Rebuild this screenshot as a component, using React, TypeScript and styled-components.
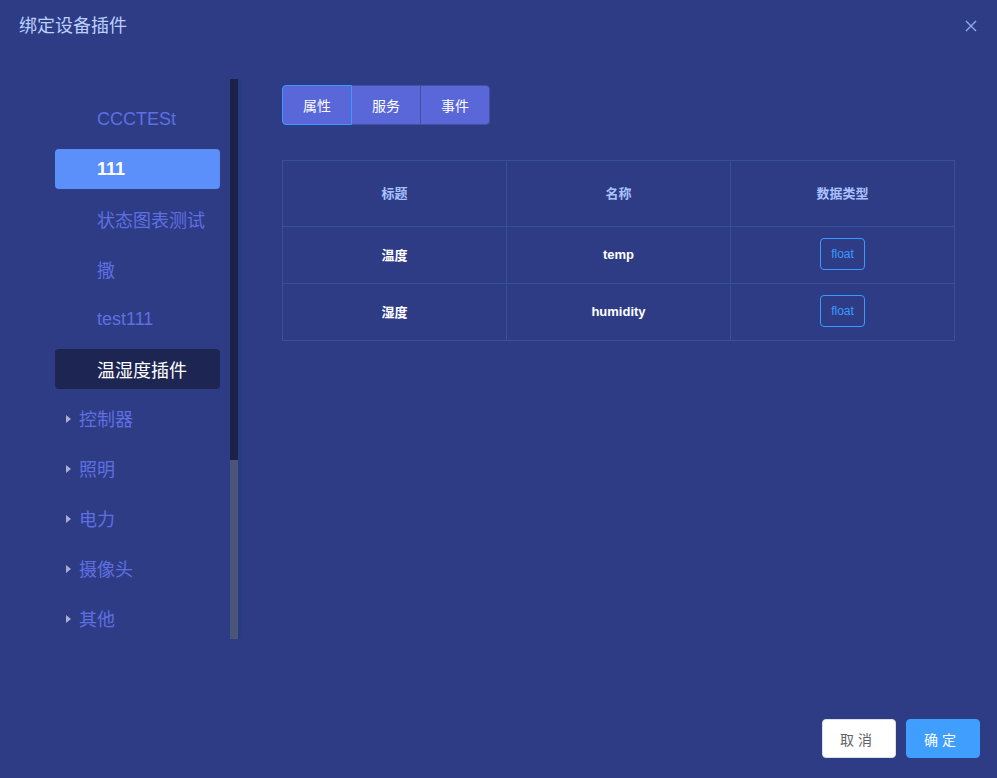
import React, { useState } from 'react';
import styled, { createGlobalStyle } from 'styled-components';

const GlobalStyle = createGlobalStyle`
  html, body {
    margin: 0;
    padding: 0;
    background: #2e3c86;
  }
  * { box-sizing: border-box; }
`;

const FONT = `"Liberation Sans", "Noto Sans CJK SC", sans-serif`;

/* ── layout ── */

const Dialog = styled.div`
  width: 997px;
  height: 778px;
  background: #2e3c86;
  font-family: ${FONT};
  display: flex;
  flex-direction: column;
`;

const Header = styled.div`
  height: 79px;
  padding: 14px 19px 0;
  display: flex;
  align-items: flex-start;
  justify-content: space-between;
`;

const Title = styled.div`
  font-size: 18px;
  line-height: 24px;
  color: #bcd0ff;
`;

const CloseBtn = styled.button`
  border: 0;
  background: none;
  padding: 0;
  margin: 6px 1px 0 0;
  cursor: pointer;
  display: flex;
  color: #8fa9f2;
`;

const Body = styled.div`
  flex: 1;
  display: flex;
  gap: 40px;
  padding: 0 42px 0 55px;
`;

const Sidebar = styled.div`
  width: 187px;
  height: 560px;
  display: flex;
  border-right: 4px solid #283a80;
`;

const List = styled.div`
  flex: 1;
  overflow: hidden;
  display: flex;
  flex-direction: column;
  gap: 10px;
  padding: 20px 10px 0 0;
`;

const ScrollTrack = styled.div`
  width: 8px;
  background: #4b5479;
  display: flex;
  flex-direction: column;
`;

const ScrollThumb = styled.div`
  background: #1b2149;
`;

const Item = styled.div<{ $variant?: 'selected' | 'dark' }>`
  flex: none;
  height: 40px;
  border-radius: 4px;
  display: flex;
  align-items: center;
  gap: 8px;
  padding-left: 42px;
  font-size: 18px;
  cursor: pointer;
  background: ${(p) =>
    p.$variant === 'selected' ? '#5b8ff9' : p.$variant === 'dark' ? '#1d2552' : 'transparent'};
  color: ${(p) => (p.$variant ? '#ffffff' : '#5e6fe0')};
  font-weight: ${(p) => (p.$variant === 'selected' ? 700 : 400)};
`;

const Group = styled(Item)`
  padding-left: 11px;
  padding-bottom: 2px;
`;

const Caret = styled.span`
  width: 0;
  height: 0;
  margin-top: 2px;
  border-top: 4px solid transparent;
  border-bottom: 4px solid transparent;
  border-left: 5px solid #a9b0cc;
`;

const Main = styled.div`
  flex: 1;
  padding-top: 6px;
  display: flex;
  flex-direction: column;
  gap: 35px;
`;

const Tabs = styled.div`
  display: flex;
`;

const Tab = styled.button<{ $active?: boolean; $first?: boolean; $last?: boolean }>`
  width: 70px;
  height: 40px;
  font-family: ${FONT};
  font-size: 14px;
  color: #ffffff;
  background: #5a67d8;
  cursor: pointer;
  border: 1px solid ${(p) => (p.$active ? '#3a9bff' : '#45509e')};
  margin-left: ${(p) => (p.$first ? '0' : '-1px')};
  border-radius: ${(p) => (p.$first ? '4px 0 0 4px' : p.$last ? '0 4px 4px 0' : '0')};
  position: relative;
  z-index: ${(p) => (p.$active ? 1 : 0)};
`;

const Table = styled.table`
  width: 673px;
  table-layout: fixed;
  border-collapse: collapse;
  border: 1px solid #36509a;
  font-size: 13px;
  font-weight: 700;
  text-align: center;
`;

const Th = styled.th`
  height: 66px;
  padding: 0 0 2px;
  border: 1px solid #36509a;
  color: #a9c2ff;
  font-weight: 700;
`;

const Td = styled.td`
  height: 57px;
  padding: 0 0 2px;
  border: 1px solid #36509a;
  color: #ffffff;
`;

const Tag = styled.span`
  display: inline-block;
  height: 32px;
  line-height: 30px;
  padding: 0 10px;
  border: 1px solid #3a9bff;
  border-radius: 4px;
  color: #3a9bff;
  font-size: 12px;
  font-weight: 400;
`;

const Footer = styled.div`
  height: 139px;
  display: flex;
  justify-content: flex-end;
  align-items: flex-end;
  gap: 10px;
  padding: 0 17px 20px 0;
`;

const Button = styled.button<{ $primary?: boolean }>`
  width: 74px;
  height: 39px;
  border-radius: 4px;
  font-family: ${FONT};
  font-size: 14px;
  letter-spacing: 4px;
  padding-left: 4px;
  cursor: pointer;
  border: 1px solid ${(p) => (p.$primary ? '#409eff' : '#dcdfe6')};
  background: ${(p) => (p.$primary ? '#409eff' : '#ffffff')};
  color: ${(p) => (p.$primary ? '#ffffff' : '#606266')};
`;

/* ── data ── */

const devices = ['CCCTESt', '111', '状态图表测试', '撒', 'test111', '温湿度插件'];
const groups = ['控制器', '照明', '电力', '摄像头', '其他'];

const rows = [
  { title: '温度', name: 'temp', type: 'float' },
  { title: '湿度', name: 'humidity', type: 'float' },
];

export default function App() {
  const [tab, setTab] = useState('属性');
  const tabs = ['属性', '服务', '事件'];
  // visible fraction of the device list
  const thumbRatio = 0.68;

  return (
    <Dialog>
      <GlobalStyle />
      <Header>
        <Title>绑定设备插件</Title>
        <CloseBtn aria-label="close">
          <svg width="12" height="12" viewBox="0 0 12 12">
            <path d="M1 1L11 11M11 1L1 11" stroke="currentColor" strokeWidth="1.4" />
          </svg>
        </CloseBtn>
      </Header>

      <Body>
        <Sidebar>
          <List>
            {devices.map((d) => (
              <Item
                key={d}
                $variant={d === '111' ? 'selected' : d === '温湿度插件' ? 'dark' : undefined}
              >
                {d}
              </Item>
            ))}
            {groups.map((g) => (
              <Group key={g}>
                <Caret />
                {g}
              </Group>
            ))}
          </List>
          <ScrollTrack>
            <ScrollThumb style={{ height: `${thumbRatio * 100}%` }} />
          </ScrollTrack>
        </Sidebar>

        <Main>
          <Tabs>
            {tabs.map((t, i) => (
              <Tab
                key={t}
                $active={tab === t}
                $first={i === 0}
                $last={i === tabs.length - 1}
                onClick={() => setTab(t)}
              >
                {t}
              </Tab>
            ))}
          </Tabs>

          <Table>
            <thead>
              <tr>
                <Th>标题</Th>
                <Th>名称</Th>
                <Th>数据类型</Th>
              </tr>
            </thead>
            <tbody>
              {rows.map((r) => (
                <tr key={r.name}>
                  <Td>{r.title}</Td>
                  <Td>{r.name}</Td>
                  <Td>
                    <Tag>{r.type}</Tag>
                  </Td>
                </tr>
              ))}
            </tbody>
          </Table>
        </Main>
      </Body>

      <Footer>
        <Button>取消</Button>
        <Button $primary>确定</Button>
      </Footer>
    </Dialog>
  );
}
